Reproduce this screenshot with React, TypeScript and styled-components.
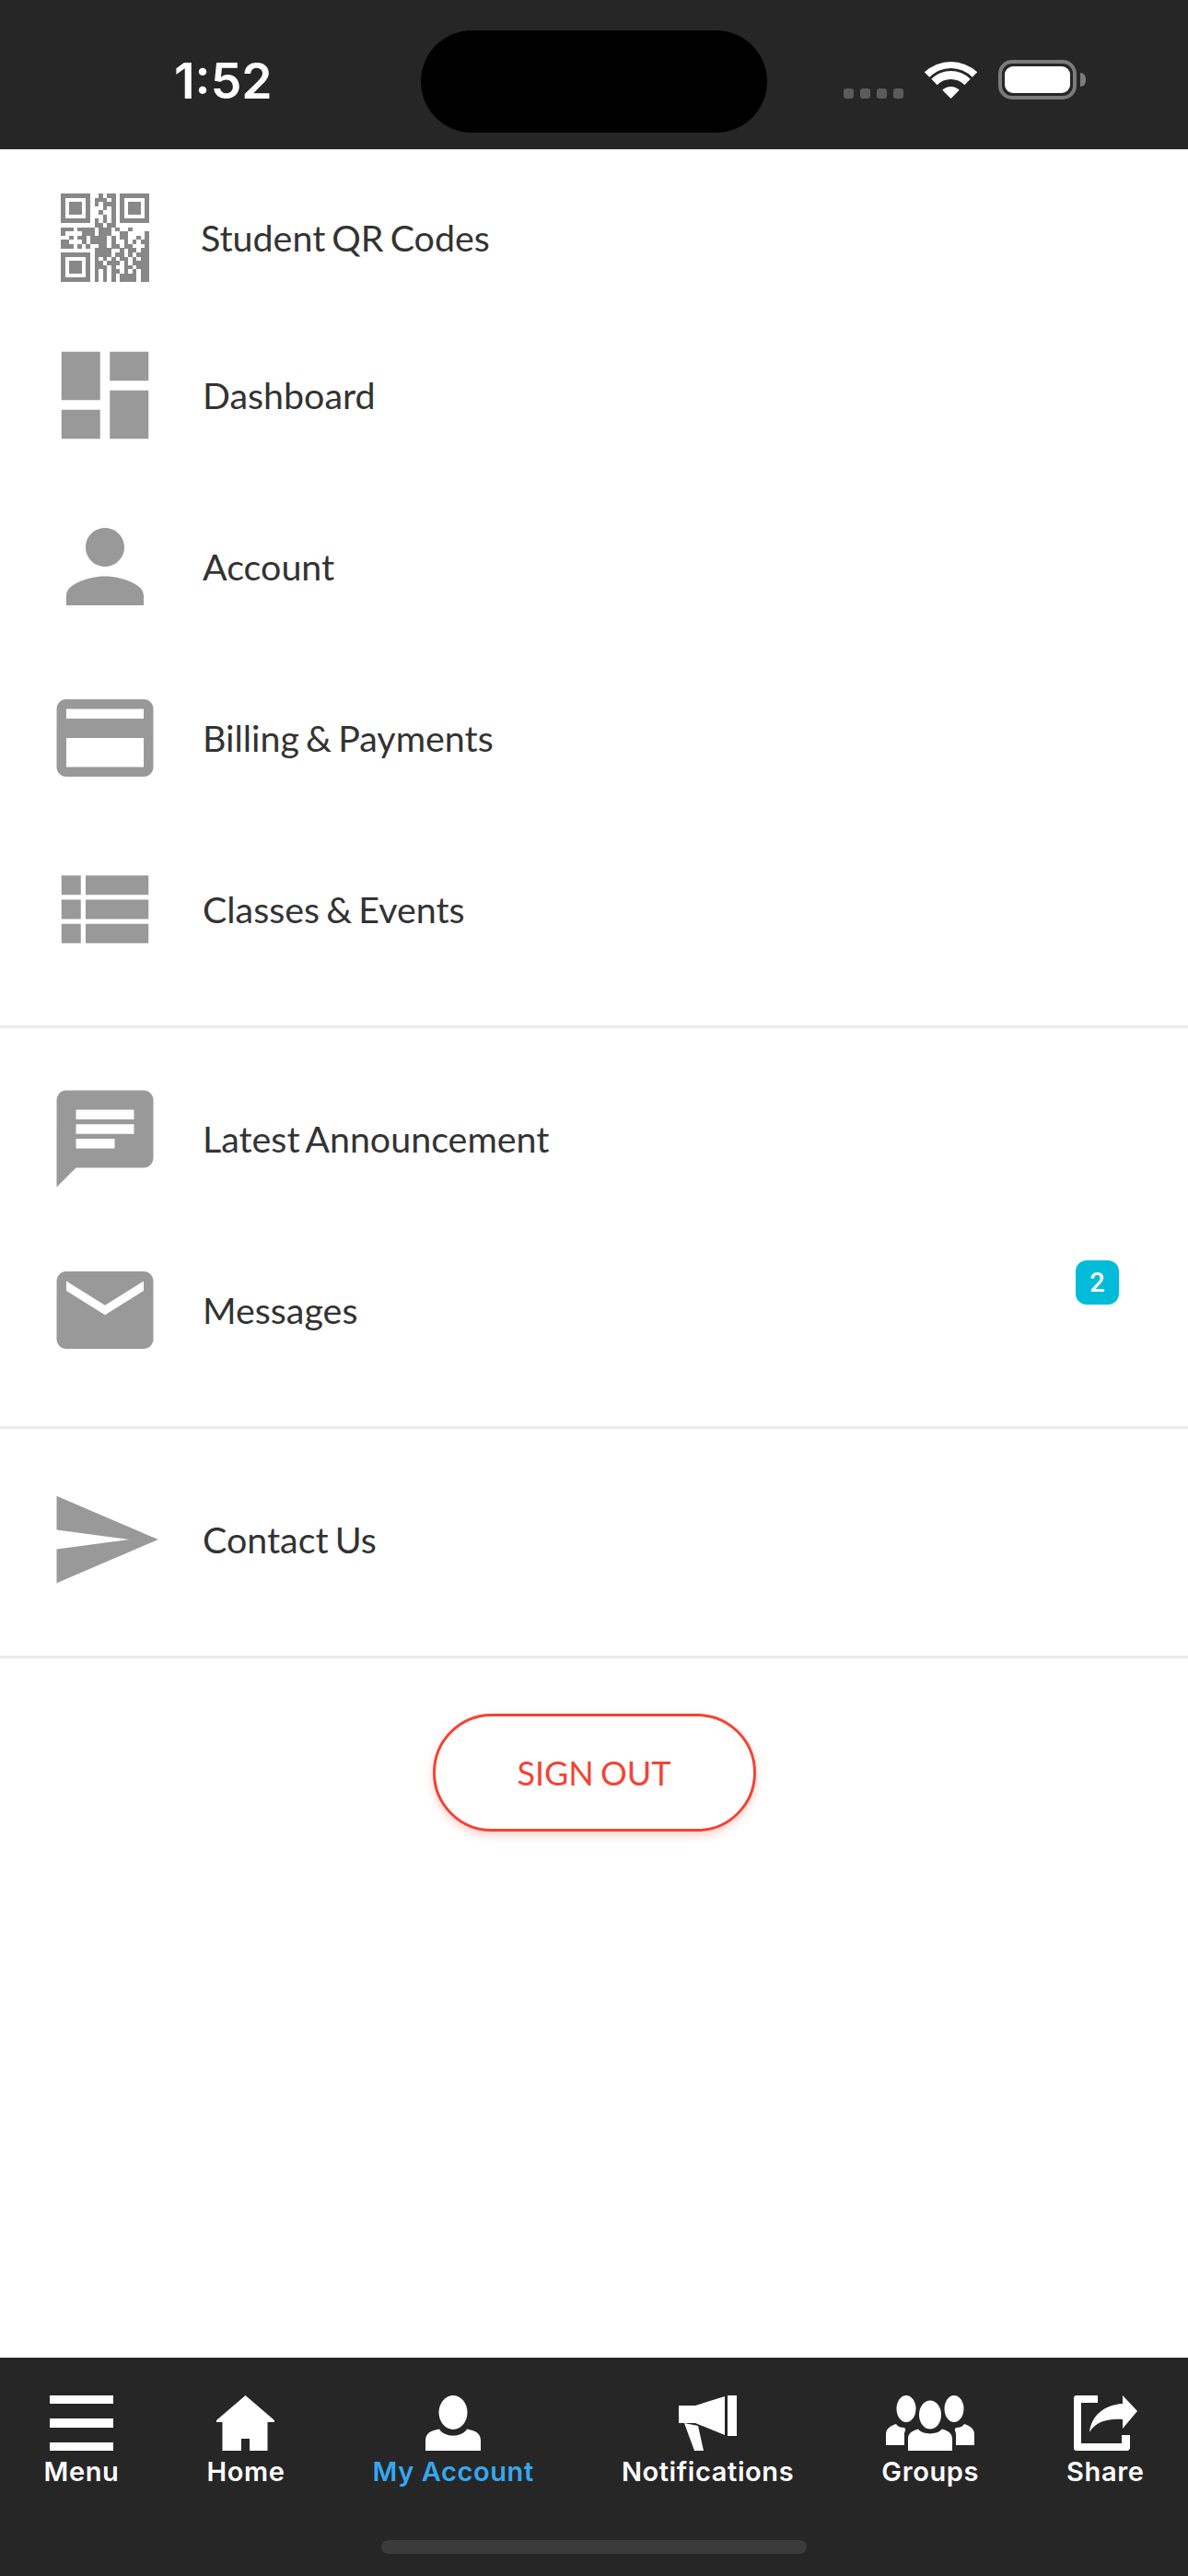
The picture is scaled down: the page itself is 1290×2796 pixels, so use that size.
import React from "react";
import styled, { createGlobalStyle } from "styled-components";

const Global = createGlobalStyle`
  html, body { margin: 0; padding: 0; background: #fff; }
  * { box-sizing: border-box; }
`;

const Page = styled.div`
  width: 1290px;
  height: 2796px;
  display: flex;
  flex-direction: column;
  background: #fff;
  font-family: "Lato", "Noto Sans", sans-serif;
`;

const StatusBar = styled.header`
  height: 162px;
  flex: none;
  background: #262626;
  display: flex;
  align-items: flex-start;
  padding: 33px 0 0 189px;
`;
const Time = styled.div`
  width: 268px;
  padding-top: 31px;
  font-family: "Inter", "Liberation Sans", sans-serif;
  font-weight: 600;
  font-size: 53.5px;
  line-height: 48px;
  color: #fff;
`;
const Island = styled.div`
  width: 376px;
  height: 111px;
  border-radius: 56px;
  background: #000;
  flex: none;
`;
const StatusIcons = styled.div`
  margin-left: 83px;
  padding-top: 32px;
  height: 75px;
  display: flex;
  align-items: flex-start;
`;
const SignalDots = styled.div`
  display: flex;
  gap: 7px;
  margin-top: 31px;
  margin-right: 23px;
`;
const SignalDot = styled.span`
  width: 11px;
  height: 11px;
  border-radius: 3px;
  background: #5b5b5b;
`;
const Battery = styled.div`
  margin-left: 23px;
  width: 85px;
  height: 43px;
  border: 4px solid #7b7b7b;
  border-radius: 15px;
  padding: 3px;
  display: flex;
  position: relative;
`;
const BatteryFill = styled.span`
  flex: 1;
  background: #fff;
  border-radius: 9px;
`;
const BatteryCap = styled.span`
  position: absolute;
  left: 85px;
  top: 10px;
  width: 6px;
  height: 15px;
  border-radius: 0 8px 8px 0;
  background: #7b7b7b;
`;

const Main = styled.main`
  flex: 1;
  display: flex;
  flex-direction: column;
`;
const Section = styled.section<{ $first?: boolean }>`
  padding: ${(p) => (p.$first ? "0 0 33px" : "27px 0 33px")};
  border-top: ${(p) => (p.$first ? "none" : "3px solid #e9ebed")};
`;
const Row = styled.div<{ $qr?: boolean }>`
  position: relative;
  height: ${(p) => (p.$qr ? 174 : 186)}px;
  padding: ${(p) => (p.$qr ? "18px 0 0 51px" : "0 0 0 51px")};
  display: flex;
  align-items: center;
  gap: ${(p) => (p.$qr ? 41 : 43)}px;
`;
const IconSlot = styled.svg`
  width: 126px;
  height: 126px;
  flex: none;
  fill: #999;
  display: block;
`;
const QrSlot = styled.svg`
  width: 126px;
  height: 126px;
  flex: none;
  fill: #888;
  display: block;
  shape-rendering: crispEdges;
`;
const RowLabel = styled.span`
  font-size: 39.4px;
  line-height: 48px;
  color: #333;
  word-spacing: -3px;
`;
const Badge = styled.span`
  position: absolute;
  top: 39px;
  right: 75px;
  width: 47px;
  height: 48px;
  border-radius: 12px;
  background: #00bcd9;
  color: #fff;
  font-family: "Roboto", sans-serif;
  font-weight: 500;
  font-size: 29px;
  display: flex;
  align-items: center;
  justify-content: center;
`;
const SignOutWrap = styled.div`
  border-top: 3px solid #e9ebed;
  padding-top: 60px;
  display: flex;
  justify-content: center;
`;
const SignOut = styled.button`
  width: 351px;
  height: 128px;
  border: 3px solid #f44333;
  border-radius: 64px;
  background: #fff;
  box-shadow: 0 4px 10px rgba(244, 67, 51, 0.25);
  color: #f44336;
  font-family: "Lato", sans-serif;
  font-size: 36px;
  word-spacing: -2px;
  padding: 0;
`;

const BottomNav = styled.nav`
  flex: none;
  height: 237px;
  background: #262626;
  padding-top: 41px;
  display: flex;
  flex-direction: column;
`;
const Tabs = styled.div`
  display: flex;
  justify-content: space-around;
  align-items: flex-start;
`;
const Tab = styled.div<{ $active?: boolean }>`
  display: flex;
  flex-direction: column;
  align-items: center;
  color: ${(p) => (p.$active ? "#35a7ee" : "#fff")};
`;
const TabIcon = styled.svg`
  height: 60px;
  display: block;
  fill: #fff;
`;
const TabLabel = styled.span`
  font-family: "Inter", "Roboto", sans-serif;
  font-weight: 600;
  font-size: 29px;
  line-height: 36px;
  margin-top: 5px;
  letter-spacing: 0.6px;
  white-space: nowrap;
`;
const HomeIndicator = styled.div`
  width: 462px;
  height: 15px;
  border-radius: 8px;
  background: #3b3b3b;
  margin: 56px auto 0;
`;

const QR_MATRIX = [
  "#######..#.##.#######",
  "#.....#.###.#.#.....#",
  "#.###.#.#.###.#.###.#",
  "#.###.#...#.#.#.###.#",
  "#.###.#..#..#.#.###.#",
  "#.....#...#.#.#.....#",
  "#######.#.#.#.#######",
  "........##.##........",
  "###.####.###.#..#....",
  "#....###.###..##....#",
  "..#.##.####.#.##..#.#",
  "##...#.####.#..#.#.##",
  "###.#.#..##.##.##...#",
  "........####..#.##.##",
  "#######.####.##.#.###",
  "#.....#.#.#.#.##.#.##",
  "#.###.#.##.###.#.####",
  "#.###.#.###.#..##.###",
  "#.###.#.#.#.##.#.#.##",
  "#.....#.#.#.#.####.##",
  "#######.#.#.#.####.##",
];

const QrIcon = () => (
  <QrSlot viewBox="-3.28 -3.28 27.56 27.56">
    {QR_MATRIX.flatMap((row, y) =>
      row.split("").map((c, x) => (c === "#" ? <rect key={`${x}-${y}`} x={x} y={y} width="1.02" height="1.02" /> : null))
    )}
  </QrSlot>
);

const Glyph = ({ d }: { d: string }) => (
  <IconSlot viewBox="0 0 24 24">
    <path d={d} />
  </IconSlot>
);

const D = {
  dashboard: "M3 13h8V3H3v10zm0 8h8v-6H3v6zm10 0h8V11h-8v10zm0-18v6h8V3h-8z",
  person: "M12 12c2.21 0 4-1.79 4-4s-1.79-4-4-4-4 1.79-4 4 1.79 4 4 4zm0 2c-2.67 0-8 1.34-8 4v2h16v-2c0-2.66-5.33-4-8-4z",
  card: "M20 4H4c-1.11 0-1.99.89-1.99 2L2 18c0 1.11.89 2 2 2h16c1.11 0 2-.89 2-2V6c0-1.11-.89-2-2-2zm0 14H4v-6h16v6zm0-10H4V6h16v2z",
  list: "M3 14h4v-4H3v4zm0 5h4v-4H3v4zM3 9h4V5H3v4zm5 5h13v-4H8v4zm0 5h13v-4H8v4zM8 5v4h13V5H8z",
  chat: "M20 2H4c-1.1 0-1.99.9-1.99 2L2 22l4-4h14c1.1 0 2-.9 2-2V4c0-1.1-.9-2-2-2zM6 9h12v2H6V9zm8 5H6v-2h8v2zm4-6H6V6h12v2z",
  mail: "M20 4H4c-1.1 0-1.99.9-1.99 2L2 18c0 1.1.9 2 2 2h16c1.1 0 2-.9 2-2V6c0-1.1-.9-2-2-2zm0 4l-8 5-8-5V6l8 5 8-5v2z",
  send: "M2.01 21L23 12 2.01 3 2 10l15 2-15 2z",
};

const Wifi = () => (
  <svg width="57" height="42" viewBox="0 0 57 42" fill="#fff" style={{ overflow: "visible" }}>
    <path d="M-0.2 13.3A42 42 0 0 1 57.2 13.3L51.8 18.7A33 33 0 0 0 5.2 18.7Z" />
    <path d="M7.3 20.8A30 30 0 0 1 49.7 20.8L43.35 27.15A21 21 0 0 0 13.65 27.15Z" />
    <path d="M19.3 32.8A13 13 0 0 1 37.7 32.8L28.5 42Z" />
  </svg>
);

const tabs = [
  {
    label: "Menu",
    w: 69,
    art: <path d="M0 0H69V9H0ZM0 25H69V35H0ZM0 51H69V60H0Z" />,
  },
  {
    label: "Home",
    w: 63,
    art: <path d="M31.5 0L63 27V29H55.5V60H36V47H27V60H6.5V29H0V27Z" />,
  },
  {
    label: "My Account",
    w: 60,
    active: true,
    art: (
      <>
        <ellipse cx="30" cy="18.5" rx="15.5" ry="18.5" />
        <path d="M0 60V49C0 41 6 38 15 36.5C20 46 40 46 45 36.5C54 38 60 41 60 49V60Z" />
      </>
    ),
  },
  {
    label: "Notifications",
    w: 63,
    art: (
      <>
        <path d="M53 0H63V44H53Z" />
        <path d="M0 11H18L50 1V43L18 30H0Z" />
        <path d="M6 30L17 60H27L21 33Z" />
      </>
    ),
  },
  {
    label: "Groups",
    w: 96,
    art: (
      <>
        <ellipse cx="48" cy="21" rx="12" ry="15.5" />
        <ellipse cx="22" cy="14.5" rx="10.5" ry="14.5" />
        <ellipse cx="74" cy="14.5" rx="10.5" ry="14.5" />
        <path d="M24 60V47C24 41 29 38 35 36.5C40 43 56 43 61 36.5C67 38 72 41 72 47V60Z" />
        <path d="M0 54V42C0 36 5 33 11 31C13 34 16 35 20 35C22 37 21 38 20 41V54Z" />
        <path d="M96 54V42C96 36 91 33 85 31C83 34 80 35 76 35C74 37 75 38 76 41V54Z" />
      </>
    ),
  },
  {
    label: "Share",
    w: 69,
    art: (
      <>
        <path d="M3 0H26V8H8V52H52V43H61V57C61 59 59 60 58 60H3C1 60 0 59 0 57V3C0 1 1 0 3 0Z" />
        <path d="M53 0L69 17L53 36V26C38 25 24 28 17 40C19 22 33 10 53 9Z" />
      </>
    ),
  },
];

export default function App() {
  return (
    <Page>
      <Global />
      <StatusBar>
        <Time>1:52</Time>
        <Island />
        <StatusIcons>
          <SignalDots>
            <SignalDot />
            <SignalDot />
            <SignalDot />
            <SignalDot />
          </SignalDots>
          <Wifi />
          <Battery>
            <BatteryFill />
            <BatteryCap />
          </Battery>
        </StatusIcons>
      </StatusBar>
      <Main>
        <Section $first>
          <Row $qr>
            <QrIcon />
            <RowLabel>Student QR Codes</RowLabel>
          </Row>
          <Row>
            <Glyph d={D.dashboard} />
            <RowLabel>Dashboard</RowLabel>
          </Row>
          <Row>
            <Glyph d={D.person} />
            <RowLabel>Account</RowLabel>
          </Row>
          <Row>
            <Glyph d={D.card} />
            <RowLabel>Billing &amp; Payments</RowLabel>
          </Row>
          <Row>
            <Glyph d={D.list} />
            <RowLabel>Classes &amp; Events</RowLabel>
          </Row>
        </Section>
        <Section>
          <Row>
            <Glyph d={D.chat} />
            <RowLabel>Latest Announcement</RowLabel>
          </Row>
          <Row>
            <Glyph d={D.mail} />
            <RowLabel>Messages</RowLabel>
            <Badge>2</Badge>
          </Row>
        </Section>
        <Section>
          <Row>
            <Glyph d={D.send} />
            <RowLabel>Contact Us</RowLabel>
          </Row>
        </Section>
        <SignOutWrap>
          <SignOut>SIGN OUT</SignOut>
        </SignOutWrap>
      </Main>
      <BottomNav>
        <Tabs>
          {tabs.map((t) => (
            <Tab key={t.label} $active={t.active}>
              <TabIcon width={t.w} viewBox={`0 0 ${t.w} 60`}>
                {t.art}
              </TabIcon>
              <TabLabel>{t.label}</TabLabel>
            </Tab>
          ))}
        </Tabs>
        <HomeIndicator />
      </BottomNav>
    </Page>
  );
}
